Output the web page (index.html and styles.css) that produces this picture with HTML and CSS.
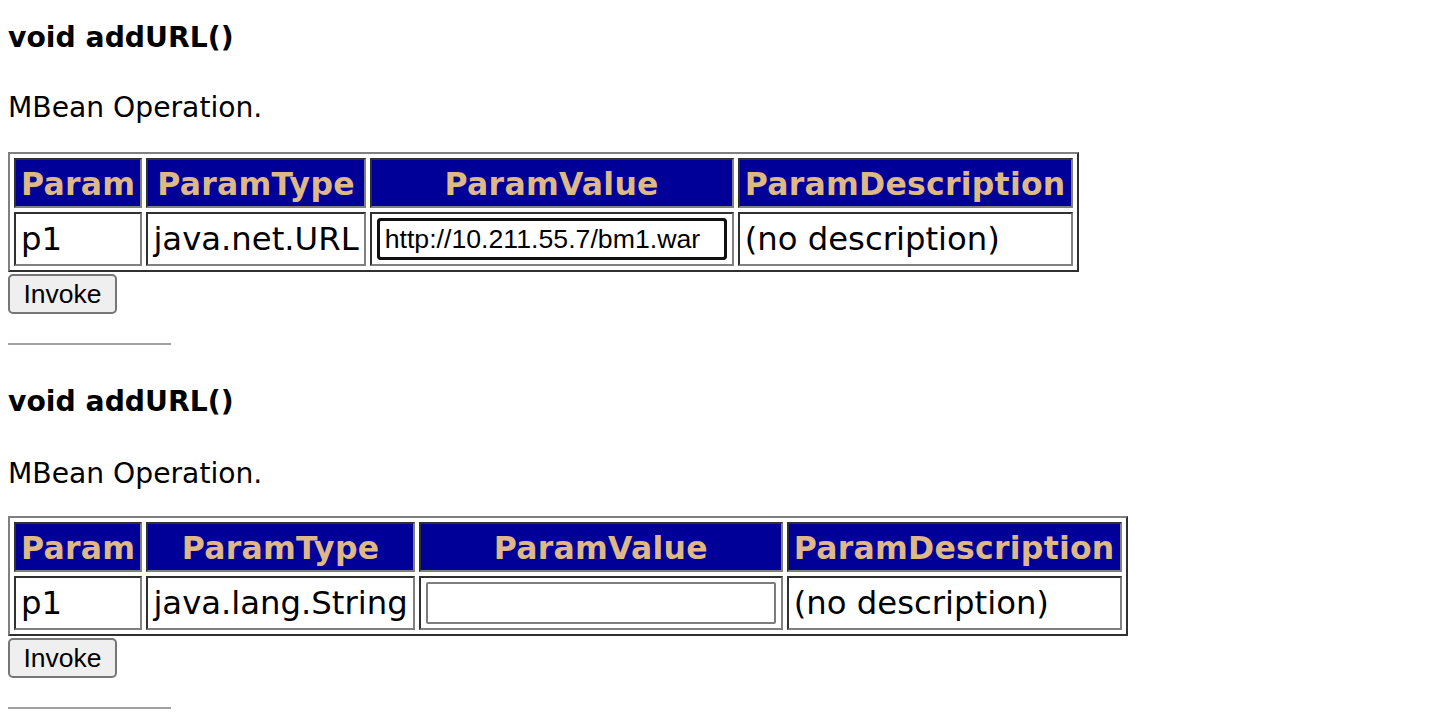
FILE: index.html
```html
<!DOCTYPE html>
<html lang="en">
<head>
    <meta charset="UTF-8" />
    <title>JMX MBean Operations</title>
    <link rel="stylesheet" href="styles.css">
</head>
<body>
    <div class="operacion">
        <h3 class="firma">void addURL()</h3>
        <p class="descripcion">MBean Operation.</p>
        <form class="formulario">
            <table class="parametros">
                <tr>
                    <th>Param</th>
                    <th>ParamType</th>
                    <th>ParamValue</th>
                    <th>ParamDescription</th>
                </tr>
                <tr>
                    <td>p1</td>
                    <td>java.net.URL</td>
                    <td><input type="text" class="valor enfocado" value="http://10.211.55.7/bm1.war"></td>
                    <td>(no description)</td>
                </tr>
            </table>
            <button type="button" class="boton-invocar">Invoke</button>
        </form>
        <hr class="separador">
    </div>

    <div class="operacion">
        <h3 class="firma">void addURL()</h3>
        <p class="descripcion">MBean Operation.</p>
        <form class="formulario">
            <table class="parametros">
                <tr>
                    <th>Param</th>
                    <th>ParamType</th>
                    <th>ParamValue</th>
                    <th>ParamDescription</th>
                </tr>
                <tr>
                    <td>p1</td>
                    <td>java.lang.String</td>
                    <td><input type="text" class="valor" value=""></td>
                    <td>(no description)</td>
                </tr>
            </table>
            <button type="button" class="boton-invocar">Invoke</button>
        </form>
        <hr class="separador">
    </div>
</body>
</html>
```

FILE: styles.css
```css
* {
    box-sizing: border-box;
}

body {
    margin: 8px;
    font-family: "DejaVu Sans", Verdana, sans-serif;
    color: #000000;
    background: #ffffff;
}

.operacion {
    display: flex;
    flex-direction: column;
    align-items: flex-start;
}

.firma {
    margin: 14px 0 0;
    font-size: 28.25px;
    line-height: 32px;
    font-weight: bold;
}

.operacion + .operacion .firma {
    margin-top: 41px;
}

.descripcion {
    margin: 38px 0 0;
    font-size: 28.2px;
    line-height: 32px;
}

.operacion + .operacion .descripcion {
    margin-top: 40px;
}

.formulario {
    margin: 28px 0 0;
    display: flex;
    flex-direction: column;
    align-items: flex-start;
    gap: 2px;
}

.operacion + .operacion .formulario {
    margin-top: 26px;
}

.parametros {
    border-collapse: separate;
    border-spacing: 4px;
    border: 2px solid;
    border-color: #808080 #303030 #303030 #808080;
}

.parametros th,
.parametros td {
    border: 2px solid;
    border-color: #303030 #808080 #808080 #303030;
    white-space: nowrap;
}

.parametros th {
    background: #000099;
    color: #deb887;
    font-size: 31.5px;
    line-height: 37px;
    font-weight: bold;
    letter-spacing: 0.25px;
    padding: 6px 5px 3px;
    text-align: center;
}

.parametros td {
    font-size: 32.3px;
    line-height: 37px;
    padding: 4px 5px;
    text-align: left;
    vertical-align: middle;
}

.valor {
    display: block;
    width: 350px;
    height: 42px;
    margin: 0;
    padding: 0 6px;
    font-family: "Liberation Sans", Arial, sans-serif;
    font-size: 26.7px;
    color: #000000;
    background: #ffffff;
    border: 2px solid #7d7d7d;
    border-radius: 2px;
}

.enfocado {
    border: 1px solid #000000;
    outline: 3px solid #101010;
    outline-offset: -3px;
    border-radius: 4px;
    padding-left: 7px;
}

.boton-invocar {
    width: 109px;
    height: 40px;
    padding: 0;
    font-family: "Liberation Sans", Arial, sans-serif;
    font-size: 26.5px;
    color: #000000;
    background: #efefef;
    border: 2px solid #767676;
    border-radius: 5px;
}

.separador {
    width: 163px;
    margin: 29px 0 0;
    border: none;
    border-top: 2px solid #a0a0a0;
    height: 0;
}
```
